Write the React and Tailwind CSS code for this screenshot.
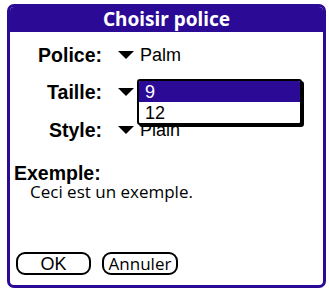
import React from "react";

const PURPLE = "bg-[#2b0a96]";

function Arrow() {
  return (
    <svg width="16" height="8" viewBox="0 0 16 8" className="mt-[6px] ml-[16px] shrink-0">
      <polygon points="0,0 16,0 8,8" fill="#000" />
    </svg>
  );
}

function Row({ label, value, h }) {
  return (
    <div className={`flex items-start ${h}`}>
      <div className="w-[92px] text-right font-['Liberation_Sans',Arial,sans-serif] font-bold text-[19.5px] leading-[20px] text-black">
        {label}
      </div>
      <Arrow />
      {value ? (
        <div className="ml-[6px] font-['Liberation_Sans',Arial,sans-serif] text-[18px] leading-[20px] text-black">
          {value}
        </div>
      ) : null}
    </div>
  );
}

export default function App() {
  return (
    <div className="w-[329px] h-[290px] bg-white pt-[4px] pl-[7px]">
      <div className="relative w-[319px] h-[284px] border-[3px] border-[#2b0a96] rounded-[7px] flex flex-col overflow-hidden">
        <div className={`${PURPLE} h-[25px] flex items-center justify-center text-white font-['Noto_Sans',sans-serif] font-bold text-[19px] leading-[25px]`}>
          Choisir police
        </div>
        <div className="pt-[13px] flex flex-col">
          <Row label="Police:" value="Palm" h="h-[37px]" />
          <Row label="Taille:" value="" h="h-[38px]" />
          <Row label="Style:" value="Plain" h="h-[43px]" />
          <div className="h-[20px] pl-[4px] font-['Liberation_Sans',Arial,sans-serif] font-bold text-[19.5px] leading-[20px] text-black">
            Exemple:
          </div>
          <div className="h-[18px] pl-[20px] font-['Open_Sans',sans-serif] text-[17px] leading-[18px] text-black">
            Ceci est un exemple.
          </div>
          <div className="mt-[51px] pl-[6px] flex gap-[11px]">
            <div className="w-[75px] h-[23px] border-2 border-black rounded-[9px] flex items-center justify-center font-['Liberation_Sans',Arial,sans-serif] text-[18px] leading-[20px] text-black">
              OK
            </div>
            <div className="w-[76px] h-[23px] border-2 border-black rounded-[9px] flex items-center justify-center font-['Open_Sans',sans-serif] text-[17px] leading-[20px] text-black">
              Annuler
            </div>
          </div>
        </div>
        <div className="absolute left-[127px] top-[72px] w-[165px] h-[46px] border-2 border-black rounded-[3px] bg-white shadow-[2px_2px_0_#000] flex flex-col overflow-hidden">
          <div className={`${PURPLE} h-[21px] pl-[6px] text-white font-['Liberation_Sans',Arial,sans-serif] text-[18px] leading-[23px]`}>
            9
          </div>
          <div className="h-[21px] pl-[6px] text-black font-['Liberation_Sans',Arial,sans-serif] text-[18px] leading-[23px]">
            12
          </div>
        </div>
      </div>
    </div>
  );
}
